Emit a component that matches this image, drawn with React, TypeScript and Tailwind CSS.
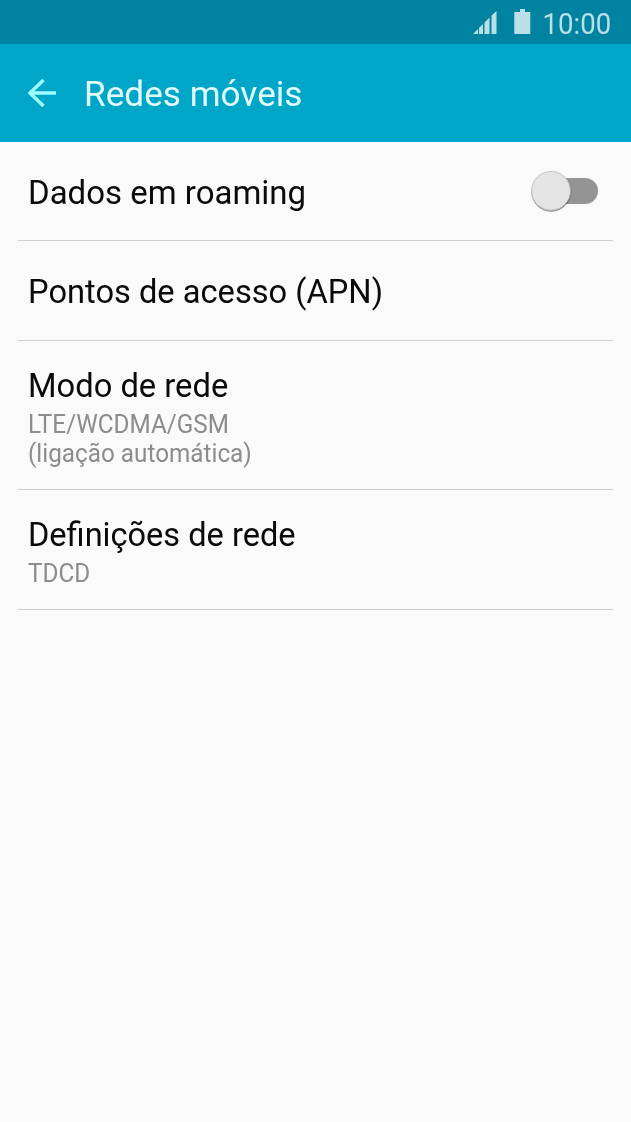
import React from 'react';

type RowProps = {
  title: string;
  lines?: string[];
  className: string;
  titleClass: string;
  children?: React.ReactNode;
};

function Row({ title, lines = [], className, titleClass, children }: RowProps) {
  return (
    <div className={`flex items-start justify-between border-b border-[#cfcfcf] pl-[10px] pr-[14px] ${className}`}>
      <div>
        <div className={`origin-left text-[34px] leading-[40px] whitespace-nowrap text-[#0a0a0a] ${titleClass}`}>{title}</div>
        <div className="pt-[5px]">
          {lines.map((line) => (
            <div key={line} className="origin-left scale-x-[0.972] text-[25px] leading-[29px] text-[#8c8c8c]">{line}</div>
          ))}
        </div>
      </div>
      {children}
    </div>
  );
}

export default function App() {
  return (
    <div className="flex h-[1122px] w-[631px] flex-col bg-[#fafafa] font-['Roboto',sans-serif]">
      <div className="flex h-[44px] items-start justify-end bg-[#0083a0] pr-[20px] text-[#b9e0e7]">
        <svg className="mt-[10px] mr-[17px] h-[24px] w-[24px]" viewBox="0 0 24 24" fill="currentColor">
          <path d="M0 24L5 19V24zM6 24v-6l4-4v10zM11.5 24V12.5l5-5V24zM18.5 24V5.5L23.5 1v23z" />
        </svg>
        <svg className="mt-[9px] mr-[12px] h-[25px] w-[17px]" viewBox="0 0 17 25" fill="currentColor">
          <path d="M6 0h5v3h5.3v22H.3V3H6z" />
        </svg>
        <span className="mt-[6px] -ml-[4px] origin-right scale-x-[0.95] text-[29px] leading-[36px]">10:00</span>
      </div>
      <header className="flex h-[98px] items-center bg-[#00a6c7] pl-[28px]">
        <svg className="mr-[27px] h-[28px] w-[29px]" viewBox="0 0 29 28" fill="none" stroke="#9ffcff" strokeWidth="3.5">
          <path d="M28 14H2M15.5 1L2 14l13.5 13" />
        </svg>
        <h1 className="origin-left scale-x-[1.005] pt-[3px] text-[35px] leading-[42px] text-[#e0fcff]">Redes móveis</h1>
      </header>
      <main className="flex flex-col px-[18px]">
        <Row title="Dados em roaming" titleClass="scale-x-[0.97]" className="h-[99px] pt-[30px]">
          <svg className="-mt-[2px] h-[44px] w-[70px]" viewBox="0 0 70 44">
            <defs>
              <filter id="knob" x="-20%" y="-20%" width="140%" height="140%">
                <feDropShadow dx="0.2" dy="1" stdDeviation="0.6" floodColor="#000" floodOpacity="0.6" />
              </filter>
            </defs>
            <rect x="20" y="8" width="49" height="26" rx="13" fill="#949494" />
            <circle cx="22" cy="20.8" r="19.4" fill="#e4e4e4" stroke="#b4b4b4" strokeWidth="0.7" filter="url(#knob)" />
          </svg>
        </Row>
        <Row title="Pontos de acesso (APN)" titleClass="scale-x-[0.96]" className="h-[100px] pt-[30px]" />
        <Row title="Modo de rede" titleClass="scale-x-[0.962]" lines={['LTE/WCDMA/GSM', '(ligação automática)']} className="h-[149px] pt-[24px]" />
        <Row title="Definições de rede" titleClass="scale-x-[0.957]" lines={['TDCD']} className="h-[120px] pt-[24px]" />
      </main>
    </div>
  );
}
